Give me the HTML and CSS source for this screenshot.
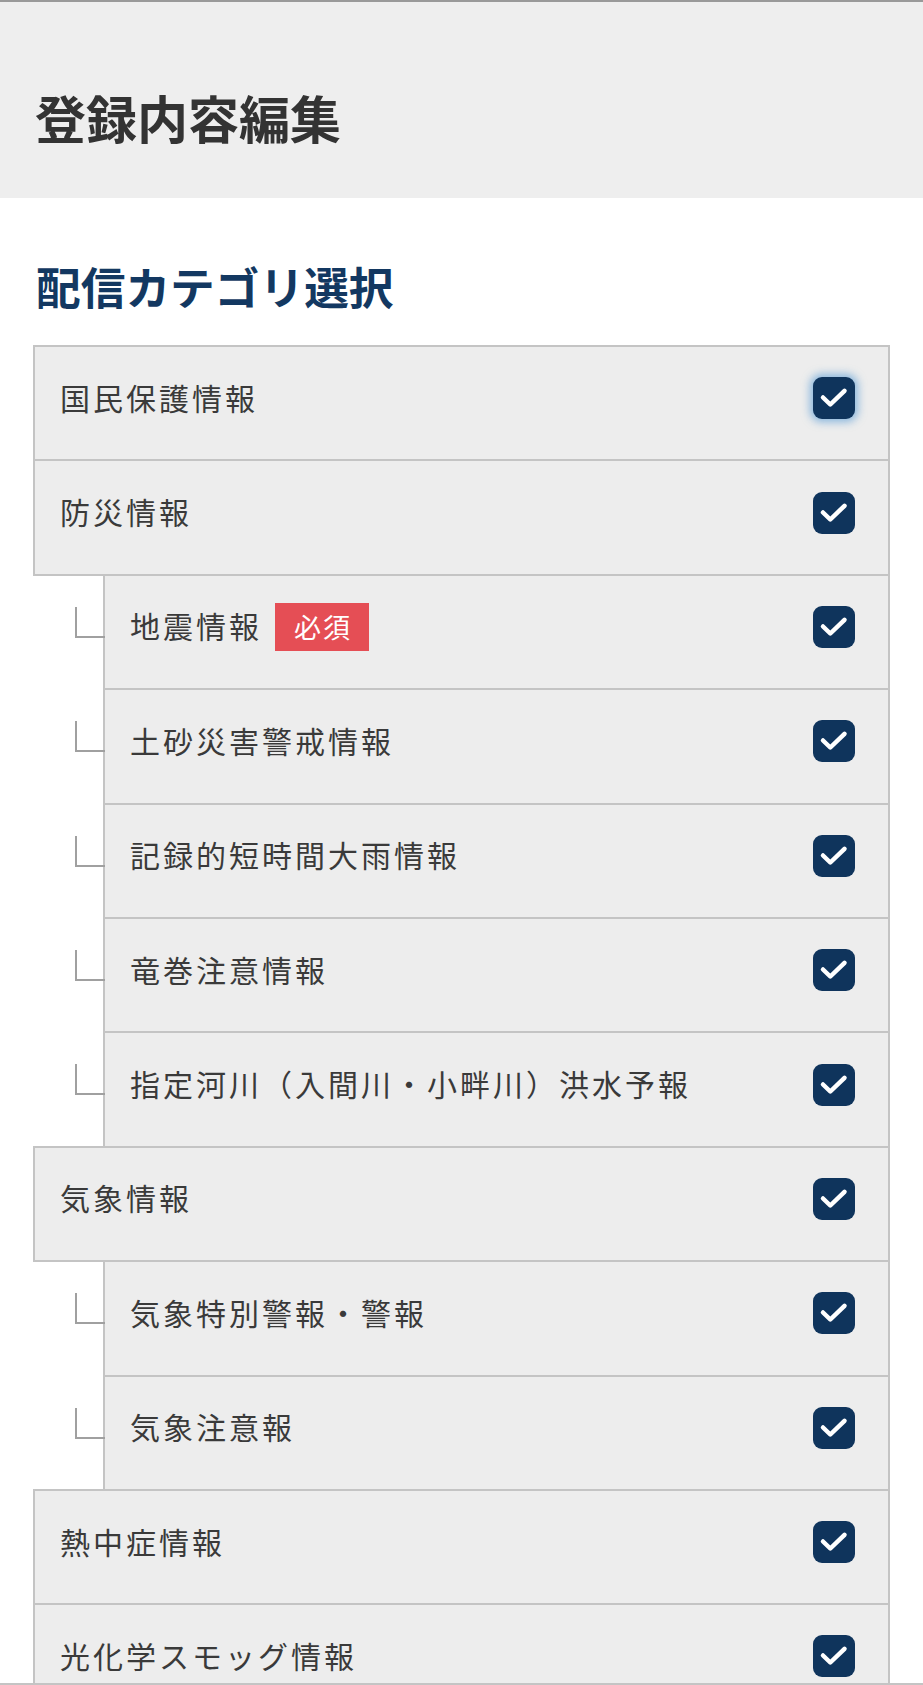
FILE: index.html
```html
<!DOCTYPE html>
<html lang="ja">
    <head>
        <meta charset="utf-8">
        <title>登録内容編集</title>
        <link rel="stylesheet" href="styles.css">
    </head>
    <body>
        <header class="page-head">
            <h1>登録内容編集</h1>
        </header>
        <main class="content">
            <h2 class="section-title">配信カテゴリ選択</h2>
            <ul class="categories">
                <li class="cat">
                    <span class="cat-name">国民保護情報</span>
                    <span class="check focus"><svg viewBox="0 0 42 42"><path d="M10 20.5 L17.3 27.5 L31.5 13.8"/></svg></span>
                </li>
                <li class="cat">
                    <span class="cat-name">防災情報</span>
                    <span class="check"><svg viewBox="0 0 42 42"><path d="M10 20.5 L17.3 27.5 L31.5 13.8"/></svg></span>
                </li>
                <li class="cat sub">
                    <span class="cat-name">地震情報</span>
                    <span class="badge">必須</span>
                    <span class="check"><svg viewBox="0 0 42 42"><path d="M10 20.5 L17.3 27.5 L31.5 13.8"/></svg></span>
                </li>
                <li class="cat sub">
                    <span class="cat-name">土砂災害警戒情報</span>
                    <span class="check"><svg viewBox="0 0 42 42"><path d="M10 20.5 L17.3 27.5 L31.5 13.8"/></svg></span>
                </li>
                <li class="cat sub">
                    <span class="cat-name">記録的短時間大雨情報</span>
                    <span class="check"><svg viewBox="0 0 42 42"><path d="M10 20.5 L17.3 27.5 L31.5 13.8"/></svg></span>
                </li>
                <li class="cat sub">
                    <span class="cat-name">竜巻注意情報</span>
                    <span class="check"><svg viewBox="0 0 42 42"><path d="M10 20.5 L17.3 27.5 L31.5 13.8"/></svg></span>
                </li>
                <li class="cat sub">
                    <span class="cat-name">指定河川（入間川・小畔川）洪水予報</span>
                    <span class="check"><svg viewBox="0 0 42 42"><path d="M10 20.5 L17.3 27.5 L31.5 13.8"/></svg></span>
                </li>
                <li class="cat">
                    <span class="cat-name">気象情報</span>
                    <span class="check"><svg viewBox="0 0 42 42"><path d="M10 20.5 L17.3 27.5 L31.5 13.8"/></svg></span>
                </li>
                <li class="cat sub">
                    <span class="cat-name">気象特別警報・警報</span>
                    <span class="check"><svg viewBox="0 0 42 42"><path d="M10 20.5 L17.3 27.5 L31.5 13.8"/></svg></span>
                </li>
                <li class="cat sub">
                    <span class="cat-name">気象注意報</span>
                    <span class="check"><svg viewBox="0 0 42 42"><path d="M10 20.5 L17.3 27.5 L31.5 13.8"/></svg></span>
                </li>
                <li class="cat">
                    <span class="cat-name">熱中症情報</span>
                    <span class="check"><svg viewBox="0 0 42 42"><path d="M10 20.5 L17.3 27.5 L31.5 13.8"/></svg></span>
                </li>
                <li class="cat">
                    <span class="cat-name">光化学スモッグ情報</span>
                    <span class="check"><svg viewBox="0 0 42 42"><path d="M10 20.5 L17.3 27.5 L31.5 13.8"/></svg></span>
                </li>
            </ul>
        </main>
        <div class="screen-edge"></div>
    </body>
</html>
```

FILE: styles.css
```css
body {
    margin: 0;
    padding: 0;
    background: #fff;
    font-family: "Noto Sans CJK JP", "Noto Sans", sans-serif;
    color: #3a3a3a;
}

.page-head {
    background: #eeeeee;
    border-top: 2px solid #999;
    padding: 80px 35px 45px;
}

.page-head h1 {
    margin: 0;
    font-size: 51px;
    line-height: 71px;
    font-weight: 700;
    color: #333;
}

.content {
    padding: 0 33px;
}

.section-title {
    margin: 56px 3px 28px;
    font-size: 44.7px;
    line-height: 63px;
    font-weight: 700;
    color: #133861;
}

.categories {
    list-style: none;
    margin: 0;
    padding: 0;
}

.cat {
    position: relative;
    box-sizing: border-box;
    height: 116.4px;
    display: flex;
    align-items: center;
    padding: 0 33px 10px 25px;
    background: #ededed;
    border: 2px solid #c4c4c4;
}

.cat + .cat {
    margin-top: -2px;
}

.cat.sub {
    margin-left: 70px;
}

.cat.sub::before {
    content: "";
    position: absolute;
    left: -30px;
    top: 31px;
    width: 28px;
    height: 29px;
    border-left: 2px solid #a0a0a0;
    border-bottom: 2px solid #a0a0a0;
}

.cat-name {
    font-size: 30px;
    line-height: 42px;
    letter-spacing: 3px;
    padding-bottom: 3px;
}

.badge {
    margin-left: 13px;
    height: 48px;
    line-height: 48px;
    padding: 0 17px 0 19px;
    background: #e54e55;
    color: #fff;
    font-size: 27px;
    letter-spacing: 2px;
}

.check {
    margin-left: auto;
    width: 42px;
    height: 42px;
    border-radius: 9px;
    background: #0f345c;
    display: flex;
}

.check svg {
    width: 42px;
    height: 42px;
}

.check path {
    fill: none;
    stroke: #fff;
    stroke-width: 4.5;
    stroke-linecap: round;
    stroke-linejoin: round;
}

.check.focus {
    box-shadow: 0 0 8px 3px rgba(70, 145, 210, 0.6);
}

.screen-edge {
    position: fixed;
    left: 0;
    right: 0;
    bottom: 0;
    height: 2px;
    background: #c4c4c4;
}
```
